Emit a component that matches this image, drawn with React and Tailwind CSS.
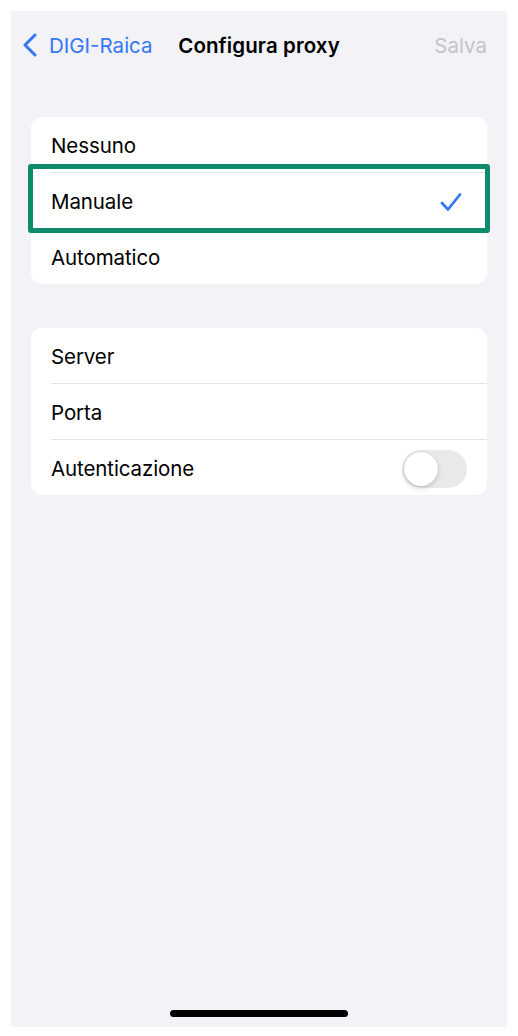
import React from "react";

const font = { fontFamily: "Inter, 'Noto Sans', 'Liberation Sans', sans-serif" };

function Row({ label, children, sep }) {
  return (
    <div className="relative">
      <div className="h-[55px] flex items-center pl-[20px] pr-[20px]">
        <span className="pt-[4px] text-[20.5px] text-black tracking-[-0.1px]">{label}</span>
        <div className="ml-auto flex items-center">{children}</div>
      </div>
      {sep && <div className="ml-[20px] h-px bg-[#e3e3e6]" />}
    </div>
  );
}

export default function App() {
  return (
    <div className="w-[518px] h-[1036px] bg-white pt-[11px] px-[11px] pb-[9px]" style={font}>
      <div className="relative h-full bg-[#f2f2f7] flex flex-col">
        {/* Nav bar */}
        <div className="relative h-[68px] flex items-center px-[11px]">
          <svg width="16" height="24" viewBox="0 0 16 24" className="shrink-0">
            <path d="M13 2 L3 12 L13 22" fill="none" stroke="#3478f6" strokeWidth="3" strokeLinecap="round" strokeLinejoin="round" />
          </svg>
          <span className="ml-[11px] pt-[2px] text-[20.5px] text-[#3478f6]">DIGI-Raica</span>
          <span className="absolute left-1/2 -translate-x-1/2 pt-[2px] text-[20.5px] font-semibold text-black tracking-[0.1px]">Configura proxy</span>
          <span className="ml-auto mr-[9px] pt-[2px] text-[20.5px] text-[#c4c4c7]">Salva</span>
        </div>

        {/* Card 1 */}
        <div className="relative mx-[20px] mt-[38px] bg-white rounded-[11px]">
          <Row label="Nessuno" sep />
          <Row label="Manuale" sep>
            <svg width="22" height="20" viewBox="0 0 22 20" className="mr-[5px] mt-[2px]">
              <path d="M2 11 L8 17.5 L20 2.5" fill="none" stroke="#3478f6" strokeWidth="2.8" strokeLinecap="round" strokeLinejoin="round" />
            </svg>
          </Row>
          <Row label="Automatico" />
          <div className="absolute left-[-3px] right-[-3px] top-[47px] h-[69px] border-[5px] border-[#0e8a6d] rounded-[3px] pointer-events-none" />
        </div>

        {/* Card 2 */}
        <div className="mx-[20px] mt-[44px] bg-white rounded-[11px]">
          <Row label="Server" sep />
          <Row label="Porta" sep />
          <Row label="Autenticazione">
            <div className="w-[65px] h-[38px] mt-[3px] rounded-full bg-[#e9e9eb] p-[2px] flex items-center">
              <div className="w-[34px] h-[34px] rounded-full bg-white shadow-[0_2px_5px_rgba(0,0,0,0.18),0_0_1px_rgba(0,0,0,0.15)]" />
            </div>
          </Row>
        </div>

        <div className="flex-1" />
        <div className="self-center w-[178px] h-[7px] rounded-full bg-black mb-[10px]" />
      </div>
    </div>
  );
}
